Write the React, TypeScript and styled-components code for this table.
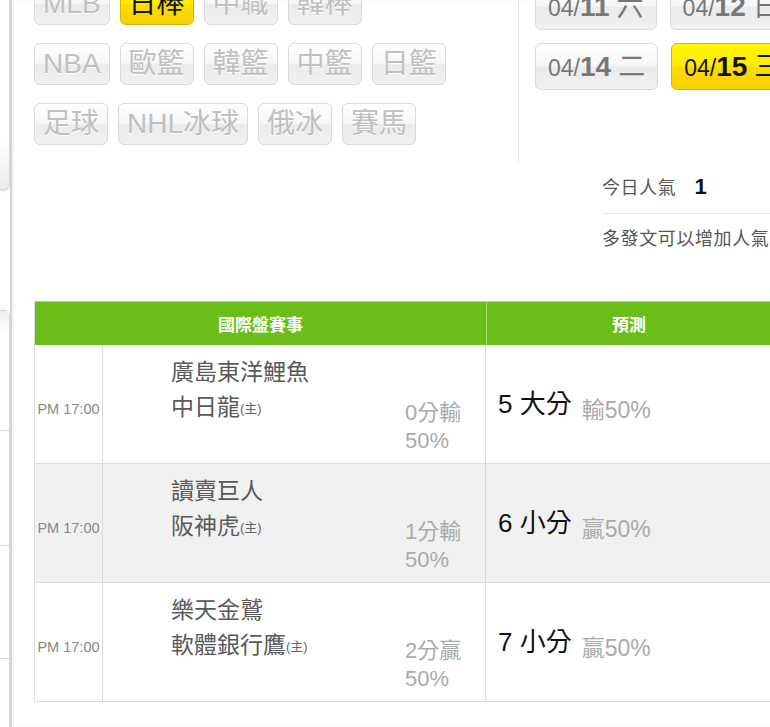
import React from 'react';
import styled, { createGlobalStyle, css } from 'styled-components';

const GlobalStyle = createGlobalStyle`
  html, body {
    margin: 0;
    padding: 0;
    background: #fff;
  }
  body {
    font-family: 'Liberation Sans', 'Noto Sans CJK TC', sans-serif;
  }
`;

const FONT = `'Liberation Sans', 'Noto Sans CJK TC', sans-serif`;

const Page = styled.div`
  display: flex;
  width: 770px;
  height: 727px;
  overflow: hidden;
  font-family: ${FONT};
`;

/* clipped sidebar on the far left */
const Sidebar = styled.div`
  width: 10px;
  flex-shrink: 0;
  display: flex;
  flex-direction: column;
`;

const SideCard = styled.div`
  height: 190px;
  box-sizing: border-box;
  background: linear-gradient(to bottom, #fff 0%, #fff 75%, #ececec 100%);
  border-right: 1px solid #d6d6d6;
  border-bottom: 1px solid #d0d0d0;
  border-bottom-right-radius: 6px;
  box-shadow: 0 1px 3px rgba(0, 0, 0, 0.12);
`;

const SideList = styled.div`
  margin-top: 120px;
  flex: 1;
  background: #fff;
  border-top: 1px solid #d6d6d6;
  border-right: 1px solid #d6d6d6;
  border-top-right-radius: 6px;
  box-shadow: 0 -1px 3px rgba(0, 0, 0, 0.08);
`;

const SideItem = styled.div<{ $h: number; $first?: boolean }>`
  height: ${(p) => p.$h}px;
  box-sizing: border-box;
  border-bottom: 1px solid #d6d6d6;
  background: ${(p) => (p.$first ? 'linear-gradient(to bottom, #efefef 0%, #fff 22px)' : '#fff')};
`;

const Main = styled.div`
  flex: 1;
  min-width: 0;
  border-left: 2px solid #d3d3d3;
  box-shadow: inset 2px 0 3px rgba(0, 0, 0, 0.05);
  padding-left: 22px;
`;

/* filter area: sport tags + dates */
const TopSection = styled.div`
  display: flex;
  margin-top: -17px;
`;

const TagPanel = styled.div`
  width: 485px;
  flex-shrink: 0;
  box-sizing: border-box;
  border-right: 1px solid #e3e3e3;
  padding-bottom: 17px;
  display: flex;
  flex-direction: column;
  gap: 18px;
`;

const TagRow = styled.div`
  display: flex;
  gap: 10px;
`;

const glossGray = css`
  background: linear-gradient(to bottom, #ffffff 0%, #f6f6f6 48%, #ebebeb 52%, #f1f1f1 100%);
  border: 1px solid #d9d9d9;
`;

const glossYellow = css`
  background: linear-gradient(to bottom, #fff700 0%, #ffec00 48%, #fbdc00 52%, #f7d000 100%);
  border: 1px solid #d8b400;
`;

const Tag = styled.div<{ $active?: boolean }>`
  ${(p) => (p.$active ? glossYellow : glossGray)};
  height: 42px;
  box-sizing: border-box;
  padding: 0 8px;
  border-radius: 6px;
  font-size: 28px;
  line-height: 40px;
  color: ${(p) => (p.$active ? '#111' : '#c0c0c0')};
  text-shadow: ${(p) => (p.$active ? 'none' : '0 1px 0 #fff')};
  white-space: nowrap;
`;

const DatePanel = styled.div`
  padding-left: 16px;
  display: flex;
  flex-direction: column;
  gap: 13px;
  min-width: 0;
`;

const DateRow = styled.div`
  display: flex;
  gap: 13px;
  white-space: nowrap;
`;

const DateBtn = styled.div<{ $active?: boolean }>`
  ${(p) => (p.$active ? glossYellow : glossGray)};
  height: 47px;
  box-sizing: border-box;
  padding: 0 12px;
  border-radius: 6px;
  line-height: 45px;
  color: ${(p) => (p.$active ? '#111' : '#777')};
  flex-shrink: 0;
`;

const DateMonth = styled.span`
  font-size: 23px;
`;

const DateDay = styled.span`
  font-size: 28px;
  font-weight: bold;
`;

const DateWeek = styled.span`
  font-size: 27px;
  margin-left: 7px;
`;

/* popularity block */
const Popularity = styled.div`
  margin: 10px 0 0 568px;
  width: 200px;
  font-size: 18px;
  color: #555;
  white-space: nowrap;
`;

const PopRow = styled.div<{ $divider?: boolean }>`
  line-height: 30px;
  padding: ${(p) => (p.$divider ? '0 0 10px' : '10px 0 0')};
  border-bottom: ${(p) => (p.$divider ? '1px solid #e6e6e6' : 'none')};
  letter-spacing: 0.6px;
`;

const PopCount = styled.span`
  font-size: 22px;
  font-weight: bold;
  color: #111;
  margin-left: 18px;
`;

/* schedule table */
const Table = styled.div`
  margin-top: 47px;
  width: 737px;
  border-left: 1px solid #dcdcdc;
  box-sizing: border-box;
`;

const HeaderRow = styled.div`
  display: grid;
  grid-template-columns: 451px 1fr;
  height: 44px;
  background: #6bbe18;
  border-top: 1px solid #a9dc72;
  box-sizing: border-box;
`;

const HeaderCell = styled.div<{ $divider?: boolean }>`
  display: flex;
  align-items: center;
  justify-content: center;
  color: #fff;
  font-size: 17px;
  font-weight: bold;
  border-left: ${(p) => (p.$divider ? '1px solid #a9dc72' : 'none')};
`;

const Row = styled.div<{ $alt?: boolean }>`
  display: grid;
  grid-template-columns: 68px 383px 1fr;
  height: 119px;
  box-sizing: border-box;
  border-bottom: 1px solid #dcdcdc;
  background: ${(p) => (p.$alt ? '#f1f1f1' : '#fff')};
`;

const TimeCell = styled.div`
  display: flex;
  align-items: center;
  justify-content: center;
  padding-top: 10px;
  font-size: 14.5px;
  color: #888;
  border-right: 1px solid #dcdcdc;
  white-space: nowrap;
`;

const TeamCell = styled.div`
  display: flex;
  border-right: 1px solid #dcdcdc;
`;

const Teams = styled.div`
  padding: 10px 0 0 68px;
  font-size: 23px;
  line-height: 35px;
  color: #595959;
  white-space: nowrap;
`;

const Home = styled.span`
  font-size: 13px;
  color: #666;
  vertical-align: 2px;
`;

const Handicap = styled.div`
  margin-left: auto;
  width: 80px;
  padding-top: 54px;
  font-size: 22px;
  line-height: 28px;
  color: #aaa;
`;

const PredictCell = styled.div`
  display: flex;
  align-items: center;
  padding-left: 12px;
  white-space: nowrap;
`;

const PredictMain = styled.span`
  font-size: 26px;
  color: #111;
`;

const PredictRate = styled.span`
  font-size: 23px;
  color: #aaa;
  margin-left: 10px;
  vertical-align: -5px;
`;

interface Game {
  away: string;
  home: string;
  handicap: string;
  rate: string;
  total: string;
  pick: string;
  result: string;
}

const games: Game[] = [
  { away: '廣島東洋鯉魚', home: '中日龍', handicap: '0分輸', rate: '50%', total: '5', pick: '大分', result: '輸50%' },
  { away: '讀賣巨人', home: '阪神虎', handicap: '1分輸', rate: '50%', total: '6', pick: '小分', result: '贏50%' },
  { away: '樂天金鷲', home: '軟體銀行鷹', handicap: '2分贏', rate: '50%', total: '7', pick: '小分', result: '贏50%' },
];

const tagRows = [
  [{ label: 'MLB' }, { label: '日棒', active: true }, { label: '中職' }, { label: '韓棒' }],
  [{ label: 'NBA' }, { label: '歐籃' }, { label: '韓籃' }, { label: '中籃' }, { label: '日籃' }],
  [{ label: '足球' }, { label: 'NHL冰球' }, { label: '俄冰' }, { label: '賽馬' }],
];

const dateRows = [
  [
    { day: '11', week: '六' },
    { day: '12', week: '日' },
  ],
  [
    { day: '14', week: '二' },
    { day: '15', week: '三', active: true },
  ],
];

export default function App() {
  return (
    <>
      <GlobalStyle />
      <Page>
        <Sidebar>
          <SideCard />
          <SideList>
            <SideItem $h={120} $first />
            <SideItem $h={115} />
            <SideItem $h={113} />
          </SideList>
        </Sidebar>
        <Main>
          <TopSection>
            <TagPanel>
              {tagRows.map((row, i) => (
                <TagRow key={i}>
                  {row.map((t) => (
                    <Tag key={t.label} $active={'active' in t && t.active}>
                      {t.label}
                    </Tag>
                  ))}
                </TagRow>
              ))}
            </TagPanel>
            <DatePanel>
              {dateRows.map((row, i) => (
                <DateRow key={i}>
                  {row.map((d) => (
                    <DateBtn key={d.day} $active={'active' in d && d.active}>
                      <DateMonth>04/</DateMonth>
                      <DateDay>{d.day}</DateDay>
                      <DateWeek>{d.week}</DateWeek>
                    </DateBtn>
                  ))}
                </DateRow>
              ))}
            </DatePanel>
          </TopSection>

          <Popularity>
            <PopRow $divider>
              今日人氣<PopCount>1</PopCount>
            </PopRow>
            <PopRow>多發文可以增加人氣</PopRow>
          </Popularity>

          <Table>
            <HeaderRow>
              <HeaderCell>國際盤賽事</HeaderCell>
              <HeaderCell $divider>預測</HeaderCell>
            </HeaderRow>
            {games.map((g, i) => (
              <Row key={g.away} $alt={i === 1}>
                <TimeCell>PM 17:00</TimeCell>
                <TeamCell>
                  <Teams>
                    <div>{g.away}</div>
                    <div>
                      {g.home}
                      <Home>(主)</Home>
                    </div>
                  </Teams>
                  <Handicap>
                    <div>{g.handicap}</div>
                    <div>{g.rate}</div>
                  </Handicap>
                </TeamCell>
                <PredictCell>
                  <span>
                    <PredictMain>
                      {g.total} {g.pick}
                    </PredictMain>
                    <PredictRate>{g.result}</PredictRate>
                  </span>
                </PredictCell>
              </Row>
            ))}
          </Table>
        </Main>
      </Page>
    </>
  );
}
